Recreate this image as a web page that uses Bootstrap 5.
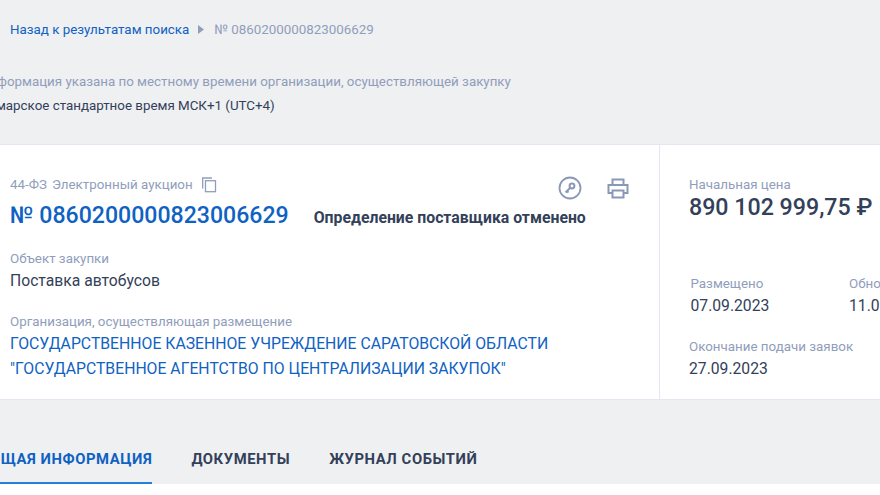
<!DOCTYPE html>
<html lang="ru">
<head>
<meta charset="utf-8">
<title>Закупка</title>
<link href="https://cdn.jsdelivr.net/npm/bootstrap@5.3.0/dist/css/bootstrap.min.css" rel="stylesheet">
<style>
html,body{height:495px;overflow:hidden}
body{background:#fff;font-family:Roboto,"Liberation Sans",sans-serif;color:#334059;width:880px}
.sheet{background:#eff0f2;width:880px;height:484px;overflow:hidden}
.crumbs{padding:21px 0 0 10px;height:73px;font-size:13.35px;line-height:17px}
.crumbs a{color:#0f62c2;text-decoration:none}
.crumbs .cur{color:#909ebb}
.crumbs svg{margin:4px 10px 0 9px}
.tz{margin-left:-20px;font-size:13.35px;height:71px}
.tz-line{line-height:17px;margin-top:7px}
.lbl{color:#909ebb;font-size:13.35px;line-height:17px}
.val{color:#334059;font-size:15.7px;line-height:20px}
.panel{background:#fff;border-top:1px solid #e4e7f2;border-bottom:1px solid #e4e7f2;height:256px;width:1000px}
.main-col{width:660px;flex:none;border-right:1px solid #e4e7f2;padding:31px 0 0 10px}
.side-col{padding:31px 0 0 29px}
.num{color:#0f62c2;font-size:23.1px;line-height:30px;font-weight:500;margin-top:4px}
.stat{font-size:15.8px;font-weight:700;line-height:20px;margin-left:25px;padding-top:11px}
.org{color:#0f62c2;font-size:15.77px;line-height:25px;text-decoration:none;display:block;margin-top:1px}
.price{font-size:23.2px;line-height:28px;font-weight:500}
.tools{right:30px;top:31px;gap:25px}
.tabs{height:84px;padding-top:48px;margin-left:-20px;gap:39px}
.tabs a{display:block;height:36px;font-size:14.8px;font-weight:700;letter-spacing:.58px;line-height:22px;color:#334059;text-decoration:none;text-transform:uppercase}
.tabs a.on{color:#0f62c2;border-bottom:2px solid #2680d9}
</style>
</head>
<body>
<div class="sheet">
  <div class="crumbs d-flex align-items-start">
    <a href="#">Назад к результатам поиска</a>
    <svg width="6" height="9" viewBox="0 0 6 9"><path d="M0 0l6 4.500L0 9z" fill="#909ebb"/></svg>
    <span class="cur">№ 0860200000823006629</span>
  </div>
  <div class="tz">
    <div class="lbl">Информация указана по местному времени организации, осуществляющей закупку</div>
    <div class="tz-line">Самарское стандартное время МСК+1 (UTC+4)</div>
  </div>
  <div class="panel d-flex">
    <div class="main-col position-relative">
      <div class="d-flex align-items-center lbl">
        <span>44-ФЗ</span><span style="margin-left:5px">Электронный аукцион</span>
        <svg style="margin-left:8px" width="16" height="16" viewBox="0 0 16 16" fill="none" stroke="#909ebb" stroke-width="1.300"><path d="M11 1H1.700v10.500"/><rect x="4.500" y="3.700" width="10" height="11"/></svg>
      </div>
      <div class="d-flex align-items-start mt-1">
        <div class="num">№ 0860200000823006629</div>
        <div class="stat">Определение поставщика отменено</div>
      </div>
      <div class="lbl" style="margin-top:19px">Объект закупки</div>
      <div class="val mt-1">Поставка автобусов</div>
      <div class="lbl" style="margin-top:22px">Организация, осуществляющая размещение</div>
      <a class="org" href="#">ГОСУДАРСТВЕННОЕ КАЗЕННОЕ УЧРЕЖДЕНИЕ САРАТОВСКОЙ ОБЛАСТИ<br>"ГОСУДАРСТВЕННОЕ АГЕНТСТВО ПО ЦЕНТРАЛИЗАЦИИ ЗАКУПОК"</a>
      <div class="tools position-absolute d-flex align-items-center">
        <svg width="24" height="24" viewBox="0 0 24 24" fill="none" stroke="#8a98b8"><circle cx="12" cy="12" r="10.500" stroke-width="1.800"/><circle cx="14" cy="10" r="2.400" stroke-width="2"/><path d="M12 12l-4.500 4.500M9 15l1.500 1.500" stroke-width="1.900"/></svg>
        <svg width="22" height="21" viewBox="0 0 22 21" fill="none" stroke="#8a98b8" stroke-width="2"><path d="M5.500 6.500V1.500h11v5"/><path d="M5 15H1.500V7h19v8H17"/><path d="M5.500 12.500h11v7h-11z"/></svg>
      </div>
    </div>
    <div class="side-col flex-grow-1">
      <div class="lbl">Начальная цена</div>
      <div class="price">890 102 999,75 ₽</div>
      <div class="d-flex" style="margin:54px 0 0 1.500px">
        <div style="width:158.500px"><div class="lbl">Размещено</div><div class="val mt-1">07.09.2023</div></div>
        <div><div class="lbl">Обновлено</div><div class="val mt-1">11.09.2023</div></div>
      </div>
      <div class="lbl" style="margin-top:22px">Окончание подачи заявок</div>
      <div class="val mt-1">27.09.2023</div>
    </div>
  </div>
  <div class="tabs d-flex">
    <a class="on" href="#">Общая информация</a>
    <a href="#">Документы</a>
    <a href="#">Журнал событий</a>
  </div>
</div>
</body>
</html>
